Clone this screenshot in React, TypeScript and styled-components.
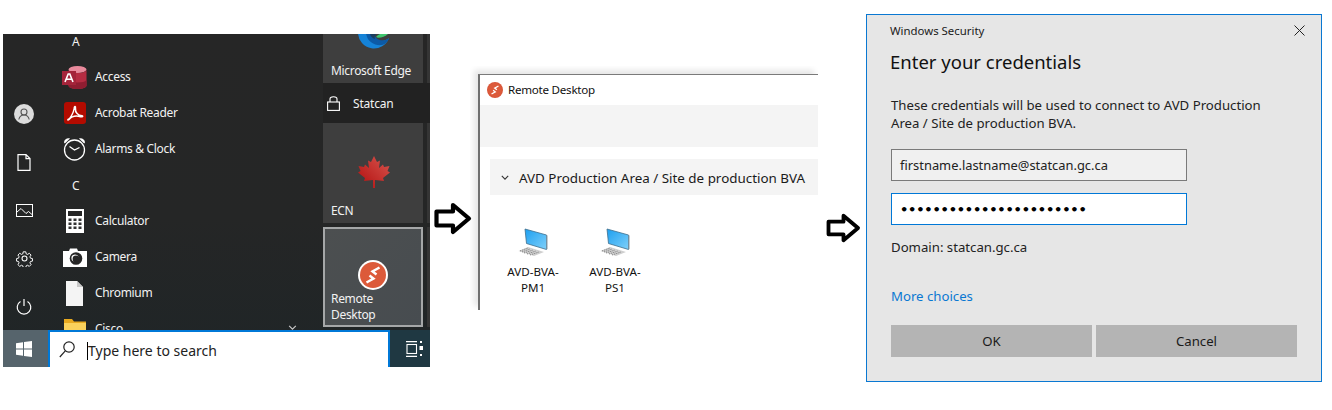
import React from "react";
import styled, { createGlobalStyle } from "styled-components";

const Global = createGlobalStyle`
  html, body { margin: 0; padding: 0; background: #fff; }
  body { font-family: "Noto Sans", "Open Sans", sans-serif; }
`;

const Page = styled.div`
  width: 1332px;
  height: 410px;
  display: flex;
  align-items: flex-start;
  overflow: hidden;
  background: #fff;
`;

const StartWrap = styled.div`
  position: relative;
  flex: none;
`;
const StartMenu = styled.div`
  margin: 34px 0 0 3px;
  width: 427px;
  height: 333px;
  display: flex;
  flex-direction: column;
  background: linear-gradient(180deg, #262626 0%, #252626 55%, #1f2527 100%);
`;
const MenuBody = styled.div`
  display: flex;
  height: 296px;
  overflow: hidden;
`;
const Rail = styled.div`
  width: 45px;
  box-sizing: border-box;
  padding-right: 3px;
  display: flex;
  flex-direction: column;
  justify-content: flex-end;
  flex: none;
`;
const RailSlot = styled.div`
  height: 48px;
  display: flex;
  align-items: center;
  justify-content: center;
  color: #fff;
`;
const AppList = styled.div`
  width: 275px;
  flex: none;
  margin-top: -11px;
  padding-left: 15px;
  box-sizing: border-box;
`;
const AppRow = styled.div`
  height: 36px;
  display: flex;
  align-items: center;
  gap: 7px;
  color: #f2f2f2;
  font-size: 12px;
  letter-spacing: -0.32px;
`;
const AppLabel = styled.span`
  padding-bottom: 2px;
`;
const Letter = styled.div`
  height: 36px;
  display: flex;
  align-items: center;
  padding-left: 9px;
  color: #f2f2f2;
  font-size: 12px;
`;
const AppIcon = styled.div`
  width: 25px;
  height: 26px;
  margin-left: -1px;
  margin-right: 1px;
  display: flex;
  align-items: center;
  justify-content: center;
  flex: none;
`;
const Tiles = styled.div`
  display: grid;
  grid-template-columns: 100px 3px;
  column-gap: 4px;
  grid-auto-rows: min-content;
  flex: none;
`;
const Tile = styled.div<{ $h: number; $gap: number; $pad?: number; $active?: boolean }>`
  height: ${(p) => p.$h}px;
  box-sizing: border-box;
  display: flex;
  flex-direction: column;
  justify-content: flex-end;
  gap: ${(p) => p.$gap}px;
  padding: 0 6px ${(p) => p.$pad ?? 4}px ${(p) => (p.$active ? 6 : 8)}px;
  background: ${(p) => (p.$active ? "linear-gradient(135deg,#4c4f50,#474c50)" : "#3e3e3e")};
  border: ${(p) => (p.$active ? "2px solid #a5a7a8" : "none")};
  overflow: hidden;
  color: #f2f2f2;
  font-size: 12px;
  letter-spacing: -0.32px;
  line-height: 16px;
  white-space: pre-line;
`;
const Strip = styled.div<{ $h: number }>`
  height: ${(p) => p.$h}px;
  background: #353535;
`;
const TileIcon = styled.div`
  display: flex;
  justify-content: center;
  flex: none;
`;
const GroupRow = styled.div`
  grid-column: 1 / span 2;
  height: 40px;
  display: flex;
  align-items: center;
  gap: 13px;
  padding-left: 4px;
  background: #222;
  color: #f2f2f2;
  font-size: 12px;
  letter-spacing: -0.2px;
`;
const Spacer = styled.div`
  grid-column: 1 / span 2;
  height: 4px;
`;
const Taskbar = styled.div`
  height: 37px;
  display: flex;
  flex: none;
`;
const StartButton = styled.div`
  width: 45px;
  background: #56646c;
  display: flex;
  align-items: center;
  justify-content: center;
  padding-right: 4px;
  box-sizing: border-box;
`;
const SearchBox = styled.div`
  width: 342px;
  box-sizing: border-box;
  background: #fff;
  border: 2px solid #0078d7;
  border-bottom: none;
  display: flex;
  align-items: center;
  padding-left: 9px;
  font-size: 14px;
  color: #222;
`;
const SearchText = styled.span`
  padding-top: 2px;
`;
const Caret = styled.span`
  width: 1px;
  height: 18px;
  background: #000;
  margin: 2px 0 0 12px;
  flex: none;
`;
const TaskView = styled.div`
  width: 40px;
  box-sizing: border-box;
  padding-left: 8px;
  background: #1f3842;
  display: flex;
  align-items: center;
  justify-content: center;
`;
const FoldMark = styled.div`
  position: absolute;
  left: 288px;
  top: 324px;
  line-height: 0;
`;

const ArrowBox = styled.div<{ $l: number; $t: number; $w: number; $h: number }>`
  margin: ${(p) => p.$t}px 0 0 ${(p) => p.$l}px;
  width: ${(p) => p.$w}px;
  height: ${(p) => p.$h}px;
  flex: none;
  display: flex;
`;

const RdWindow = styled.div`
  margin: 74px 0 0 6px;
  width: 340px;
  height: 236px;
  flex: none;
  box-sizing: border-box;
  border-left: 2px solid #707070;
  border-top: 1px solid #7a7a7a;
  box-shadow: -4px -4px 6px rgba(0, 0, 0, 0.1);
  background: #fff;
  overflow: hidden;
  clip-path: inset(-8px 0 0 -8px);
`;
const RdTitle = styled.div`
  height: 30px;
  box-sizing: border-box;
  padding: 0 0 1px 7px;
  display: flex;
  align-items: center;
  gap: 5px;
  font-size: 11.6px;
  letter-spacing: -0.25px;
  color: #111;
`;
const CommandBar = styled.div`
  height: 42px;
  background: #f4f4f4;
`;
const Group = styled.div`
  margin: 12px 0 0 10px;
  height: 36px;
  box-sizing: border-box;
  padding: 1px 0 0 11px;
  background: #f4f4f4;
  display: flex;
  align-items: center;
  gap: 10px;
  font-size: 13.4px;
  color: #1a1a1a;
  white-space: nowrap;
`;
const Hosts = styled.div`
  display: flex;
  margin: 33px 0 0 12px;
`;
const Host = styled.div`
  width: 82px;
  display: flex;
  flex-direction: column;
  align-items: center;
  text-align: center;
  font-size: 11.6px;
  line-height: 16px;
  color: #111;
  white-space: pre-line;
  gap: 7px;
`;

const Dialog = styled.div`
  margin: 14px 0 0 4px;
  width: 456px;
  height: 368px;
  box-sizing: border-box;
  flex: none;
  background: #e6e6e6;
  border: 1px solid #0a78d2;
  padding: 0 24px;
  display: flex;
  flex-direction: column;
  color: #1a1a1a;
`;
const DialogHead = styled.div`
  height: 30px;
  display: flex;
  align-items: center;
  justify-content: space-between;
  font-size: 11.4px;
  margin: 0 -8px 0 -1px;
`;
const Heading = styled.div`
  font-size: 18.5px;
  line-height: 28px;
  margin: 3px 0 0 -1px;
  color: #111;
`;
const Para = styled.div`
  margin-top: 20px;
  font-size: 13.2px;
  line-height: 18px;
  color: #222;
`;
const Field = styled.div<{ $focus?: boolean }>`
  width: 296px;
  height: 32px;
  box-sizing: border-box;
  margin-top: ${(p) => (p.$focus ? 12 : 17)}px;
  border: 1.5px solid ${(p) => (p.$focus ? "#0078d7" : "#7a7a7a")};
  background: ${(p) => (p.$focus ? "#fff" : "#f0f0f0")};
  padding-left: 8px;
  display: flex;
  align-items: center;
  font-size: 12.9px;
  color: #222;
  white-space: nowrap;
`;
const Dots = styled.span`
  font-family: "DejaVu Sans", sans-serif;
  font-size: 13px;
  font-weight: 700;
  letter-spacing: -0.2px;
  color: #000;
  margin-top: 1px;
`;
const Domain = styled.div`
  margin-top: 13px;
  font-size: 13.2px;
  line-height: 18px;
  color: #222;
`;
const MoreLink = styled.div`
  margin-top: 31px;
  font-size: 13.2px;
  line-height: 18px;
  color: #0a78d2;
`;
const Buttons = styled.div`
  margin: 20px -1px 0 0;
  display: flex;
  gap: 4px;
`;
const DlgButton = styled.div`
  width: 201px;
  height: 32px;
  background: #b4b4b4;
  display: flex;
  align-items: center;
  justify-content: center;
  font-size: 13.2px;
  color: #1a1a1a;
`;

const OutlineArrow = ({ w, h }: { w: number; h: number }) => (
  <svg width={w} height={h} viewBox="0 0 38 33">
    <path d="M2.500 9.500H19V3L35 16.500L19 30V23.500H2.500Z" fill="#fff" stroke="#000" strokeWidth="4.200" strokeLinejoin="round" />
  </svg>
);

const RdLogo = ({ size, ring }: { size: number; ring?: boolean }) => (
  <svg width={size} height={size} viewBox="0 0 30 30">
    <circle cx="15" cy="15" r="15" fill={ring ? "#fff" : "#d9563a"} />
    <circle cx="15" cy="15" r="13" fill="#dc5a3a" />
    <path d="M21.500 7.500L14.500 11.500L18.500 14.500M8.500 22.500L15.500 18.500L11.500 15.500" fill="none" stroke="#fff" strokeWidth="2.400" />
  </svg>
);

const MonitorIcon = () => (
  <svg width="30" height="29" viewBox="0 0 30 29">
    <defs>
      <linearGradient id="scr" x1="0" y1="0" x2="1" y2="1">
        <stop offset="0" stopColor="#1c9ff0" />
        <stop offset="1" stopColor="#7fd0fa" />
      </linearGradient>
    </defs>
    <path d="M7 1L28.500 7V21.500L8.500 15.500Z" fill="url(#scr)" stroke="#3d6d8c" strokeWidth="0.800" />
    <path d="M28.500 7V21.500L29.500 21V7.500Z" fill="#8a9aa4" />
    <path d="M0.500 23L10 19L26 24L16 28Z" fill="#cfcfcf" />
    <path d="M2 23L10 20M4 24L12 21M6 25L15 22M9 26L18 23M12 27L21 24" stroke="#6f6f6f" strokeWidth="0.900" strokeDasharray="1 1" />
  </svg>
);

const DocIcon = () => (
  <svg width="14" height="17" viewBox="0 0 14 17" fill="none" stroke="#fff" strokeWidth="1.200">
    <path d="M1 .6H9L13 4.600V16.400H1ZM9 .6V4.600H13" />
  </svg>
);
const PictureIcon = () => (
  <svg width="17" height="13" viewBox="0 0 17 13" fill="none" stroke="#fff" strokeWidth="1">
    <rect x=".5" y=".5" width="16" height="12" />
    <path d="M1 8L5 4.500L10 9.500L12.500 7.500L16 10.500" />
  </svg>
);
const GearIcon = () => (
  <svg width="17" height="17" viewBox="0 0 24 24" fill="none" stroke="#fff" strokeWidth="1.500">
    <circle cx="12" cy="12" r="3.500" />
    <path d="M10 1.500h4l.6 3.200 2.200.9 2.700-1.800 2.800 2.800-1.800 2.700.9 2.200 3.100.6v4l-3.100.6-.9 2.200 1.800 2.700-2.800 2.800-2.700-1.800-2.200.9-.6 2.700h-4l-.6-2.700-2.200-.9-2.700 1.800-2.800-2.800 1.800-2.700-.9-2.200-3.100-.6v-4l3.100-.6.900-2.200-1.800-2.700 2.800-2.800 2.700 1.800 2.200-.9z" transform="translate(1.200 1.200) scale(.9)" />
  </svg>
);
const PowerIcon = () => (
  <svg width="16" height="17" viewBox="0 0 16 17" fill="none" stroke="#fff" strokeWidth="1.200">
    <path d="M8 1V8M4.500 3.500A6.800 6.800 0 1 0 11.500 3.500" />
  </svg>
);
const AvatarIcon = () => (
  <svg width="20" height="20" viewBox="0 0 20 20">
    <circle cx="10" cy="10" r="10" fill="#dcdcdc" />
    <circle cx="10" cy="8" r="3" fill="none" stroke="#555" strokeWidth="1.100" />
    <path d="M4.800 15.500C5.500 12.500 7.500 11 10 11S14.500 12.500 15.200 15.500" fill="none" stroke="#555" strokeWidth="1.100" />
  </svg>
);

const AccessIcon = () => (
  <svg width="25" height="25" viewBox="0 0 25 25">
    <ellipse cx="15.500" cy="4.500" rx="9" ry="3.500" fill="#e98a9c" />
    <path d="M6.500 4.500V20.500C6.500 22.500 10.500 24 15.500 24S24.500 22.500 24.500 20.500V4.500C24.500 6.500 20.500 8 15.500 8S6.500 6.500 6.500 4.500Z" fill="#b62c42" />
    <path d="M6.500 15C8 16.800 11 17.500 15.500 17.500S23 16.800 24.500 15V20.500C24.500 22.500 20.500 24 15.500 24S6.500 22.500 6.500 20.500Z" fill="#8f1d31" />
    <rect x="0" y="6" width="14" height="14" fill="#a4243a" />
    <path d="M3 17L6.200 9H7.800L11 17M4.300 14.300H9.700" fill="none" stroke="#fff" strokeWidth="1.600" />
  </svg>
);
const AcrobatIcon = () => (
  <svg width="22" height="22" viewBox="0 0 22 22">
    <rect width="22" height="22" rx="3" fill="#b30b00" />
    <path d="M4 17.500C6 17 9.500 11 10.200 6.500C10.500 3.500 11.800 4 11.500 6.500C11 10.500 14 13.500 18 13.800C19.500 14 18.500 15.200 16.500 14.700C12.500 13.500 8 14 5 17.500C4 18.500 3.500 18 4 17.500Z" fill="none" stroke="#fff" strokeWidth="1.500" />
  </svg>
);
const ClockIcon = () => (
  <svg width="23" height="24" viewBox="0 0 23 24">
    <path d="M1 5.500C1 2.500 4 .8 7 1.500L1.800 6.500ZM22 5.500C22 2.500 19 .8 16 1.500L21.200 6.500Z" fill="#fff" />
    <circle cx="11.500" cy="13" r="10" fill="none" stroke="#fff" strokeWidth="1.300" />
    <path d="M6.500 9.500L11.500 13L16.500 10.500" fill="none" stroke="#fff" strokeWidth="1.300" />
  </svg>
);
const CalcIcon = () => (
  <svg width="18" height="24" viewBox="0 0 18 24">
    <rect width="18" height="24" fill="#fff" />
    <rect x="2" y="2" width="14" height="5" fill="#262626" />
    {[9.5, 13.5, 17.5].flatMap((y) =>
      [2.5, 7.5, 12.5].map((x) => <rect key={`${x}-${y}`} x={x} y={y} width="3" height="2.500" fill="#333" />)
    )}
  </svg>
);
const CameraIcon = () => (
  <svg width="24" height="19" viewBox="0 0 24 19">
    <path d="M0 3H6L7 .5H14L15 3H24V19H0Z" fill="#fff" />
    <circle cx="13" cy="10.500" r="6.300" fill="#262626" />
    <circle cx="12" cy="10" r="3.600" fill="#fff" />
    <circle cx="13" cy="11" r="3.400" fill="#262626" />
  </svg>
);
const FileIcon = () => (
  <svg width="17" height="25" viewBox="0 0 17 25">
    <path d="M0 0H11L17 6V25H0Z" fill="#f4f4f4" />
    <path d="M11 0V6H17Z" fill="#c8c8c8" />
  </svg>
);
const FolderIcon = () => (
  <svg width="22" height="20" viewBox="0 0 22 20">
    <path d="M0 0H8L10 2.500H22V20H0Z" fill="#e8a91f" />
    <rect y="4" width="22" height="16" fill="#fbd25c" />
  </svg>
);
const EdgeIcon = () => (
  <svg width="32" height="32" viewBox="0 0 32 32">
    <path d="M0 16A16 16 0 0 0 31 21C27 25 15 27 12 17Z" fill="#1583d8" />
    <path d="M8 16C9 25 17 29 24 28C28 27 30 24 31 21C26 25 17 24 16 16Z" fill="#0c5aa6" />
    <path d="M18 20C20 22 28 20 31 16C28 15 21 16 18 20Z" fill="#3fc76f" />
    <path d="M12 16H19C17 18 16 20 17 22C14 21 12 19 12 16Z" fill="#1b3e5f" />
  </svg>
);
const MapleLeaf = () => (
  <svg width="32" height="32" viewBox="0 0 32 32">
    <defs>
      <linearGradient id="leaf" x1="0" y1="1" x2="1" y2="0">
        <stop offset="0" stopColor="#b10d0d" />
        <stop offset="1" stopColor="#d8564f" />
      </linearGradient>
    </defs>
    <path d="M16 0L19 6L22 4.500L21 12L25 8.500L26 11L31.500 10L29.500 15L32 16.500L25 22L26 25L17 24V32H15V24L6 25L7 22L0 16.500L2.500 15L.5 10L6 11L7 8.500L11 12L10 4.500L13 6Z" fill="url(#leaf)" />
  </svg>
);
const LockIcon = () => (
  <svg width="13" height="16" viewBox="0 0 13 16" fill="none" stroke="#fff" strokeWidth="1.100">
    <rect x=".6" y="7" width="11.800" height="8.400" />
    <path d="M3 7V4C3 1 10 1 10 4V7" />
  </svg>
);
const WinLogo = () => (
  <svg width="16" height="16" viewBox="0 0 16 16" fill="#fff">
    <path d="M0 2.200L7 1.200V7.500H0ZM8 1L16 0V7.500H8ZM0 8.500H7V14.800L0 13.800ZM8 8.500H16V16L8 15Z" />
  </svg>
);
const SearchIcon = () => (
  <svg width="16" height="17" viewBox="0 0 16 17" fill="none" stroke="#222" strokeWidth="1.200">
    <circle cx="10" cy="6" r="5.200" />
    <path d="M6.300 9.800L.8 16" />
  </svg>
);
const TaskViewIcon = () => (
  <svg width="17" height="16" viewBox="0 0 17 16" fill="none" stroke="#fff" strokeWidth="1.100">
    <path d="M0 .6H11M0 15.400H11" />
    <rect x="1" y="3.500" width="9.500" height="9" />
    <rect x="14" y="0" width="2" height="2" fill="#fff" stroke="none" />
    <rect x="13.500" y="5" width="3.500" height="4" fill="#fff" stroke="none" />
    <rect x="14" y="13" width="2" height="2" fill="#fff" stroke="none" />
  </svg>
);
const Chevron = ({ stroke, w, h }: { stroke: string; w: number; h: number }) => (
  <svg width={w} height={h} viewBox="0 0 10 6" fill="none" stroke={stroke} strokeWidth="1.400">
    <path d="M1 1L5 5L9 1" />
  </svg>
);
const CloseIcon = () => (
  <svg width="11" height="11" viewBox="0 0 11 11" stroke="#222" strokeWidth="1" fill="none">
    <path d="M.5 .5L10.500 10.500M10.500 .5L.5 10.500" />
  </svg>
);

const apps: Array<[string, React.ReactNode] | string> = [
  "A",
  ["Access", <AccessIcon />],
  ["Acrobat Reader", <AcrobatIcon />],
  ["Alarms & Clock", <ClockIcon />],
  "C",
  ["Calculator", <CalcIcon />],
  ["Camera", <CameraIcon />],
  ["Chromium", <FileIcon />],
  ["Cisco", <FolderIcon />],
];

export default function App() {
  return (
    <Page>
      <Global />
      <StartWrap>
        <StartMenu>
          <MenuBody>
            <Rail>
              <RailSlot><AvatarIcon /></RailSlot>
              <RailSlot><DocIcon /></RailSlot>
              <RailSlot><PictureIcon /></RailSlot>
              <RailSlot><GearIcon /></RailSlot>
              <RailSlot><PowerIcon /></RailSlot>
            </Rail>
            <AppList>
              {apps.map((a) =>
                typeof a === "string" ? (
                  <Letter key={a}>{a}</Letter>
                ) : (
                  <AppRow key={a[0]}>
                    <AppIcon>{a[1]}</AppIcon>
                    <AppLabel>{a[0]}</AppLabel>
                  </AppRow>
                )
              )}
            </AppList>
            <Tiles>
              <Tile $h={49} $gap={14}>
                <TileIcon><EdgeIcon /></TileIcon>
                Microsoft Edge
              </Tile>
              <Strip $h={49} />
              <GroupRow><LockIcon />Statcan</GroupRow>
              <Tile $h={100} $gap={15} $pad={4}>
                <TileIcon><MapleLeaf /></TileIcon>
                ECN
              </Tile>
              <Strip $h={100} />
              <Spacer />
              <Tile $h={100} $gap={1} $active $pad={2}>
                <TileIcon><RdLogo size={30} ring /></TileIcon>
                {"Remote\nDesktop"}
              </Tile>
              <Strip $h={100} />
            </Tiles>
          </MenuBody>
          <Taskbar>
            <StartButton><WinLogo /></StartButton>
            <SearchBox>
              <SearchIcon />
              <Caret />
              <SearchText>Type here to search</SearchText>
            </SearchBox>
            <TaskView><TaskViewIcon /></TaskView>
          </Taskbar>
        </StartMenu>
        <FoldMark><Chevron stroke="#c8c8c8" w={9} h={5} /></FoldMark>
      </StartWrap>

      <ArrowBox $l={4} $t={202} $w={38} $h={33}><OutlineArrow w={38} h={33} /></ArrowBox>

      <RdWindow>
        <RdTitle><RdLogo size={16} />Remote Desktop</RdTitle>
        <CommandBar />
        <Group>
          <Chevron stroke="#333" w={8} h={5} />
          AVD Production Area / Site de production BVA
        </Group>
        <Hosts>
          <Host><MonitorIcon />{"AVD-BVA-\nPM1"}</Host>
          <Host><MonitorIcon />{"AVD-BVA-\nPS1"}</Host>
        </Hosts>
      </RdWindow>

      <ArrowBox $l={7} $t={213} $w={37} $h={30}><OutlineArrow w={37} h={30} /></ArrowBox>

      <Dialog>
        <DialogHead>
          Windows Security
          <CloseIcon />
        </DialogHead>
        <Heading>Enter your credentials</Heading>
        <Para>
          These credentials will be used to connect to AVD Production
          <br />
          Area / Site de production BVA.
        </Para>
        <Field>firstname.lastname@statcan.gc.ca</Field>
        <Field $focus><Dots>{"•".repeat(23)}</Dots></Field>
        <Domain>Domain: statcan.gc.ca</Domain>
        <MoreLink>More choices</MoreLink>
        <Buttons>
          <DlgButton>OK</DlgButton>
          <DlgButton>Cancel</DlgButton>
        </Buttons>
      </Dialog>
    </Page>
  );
}
